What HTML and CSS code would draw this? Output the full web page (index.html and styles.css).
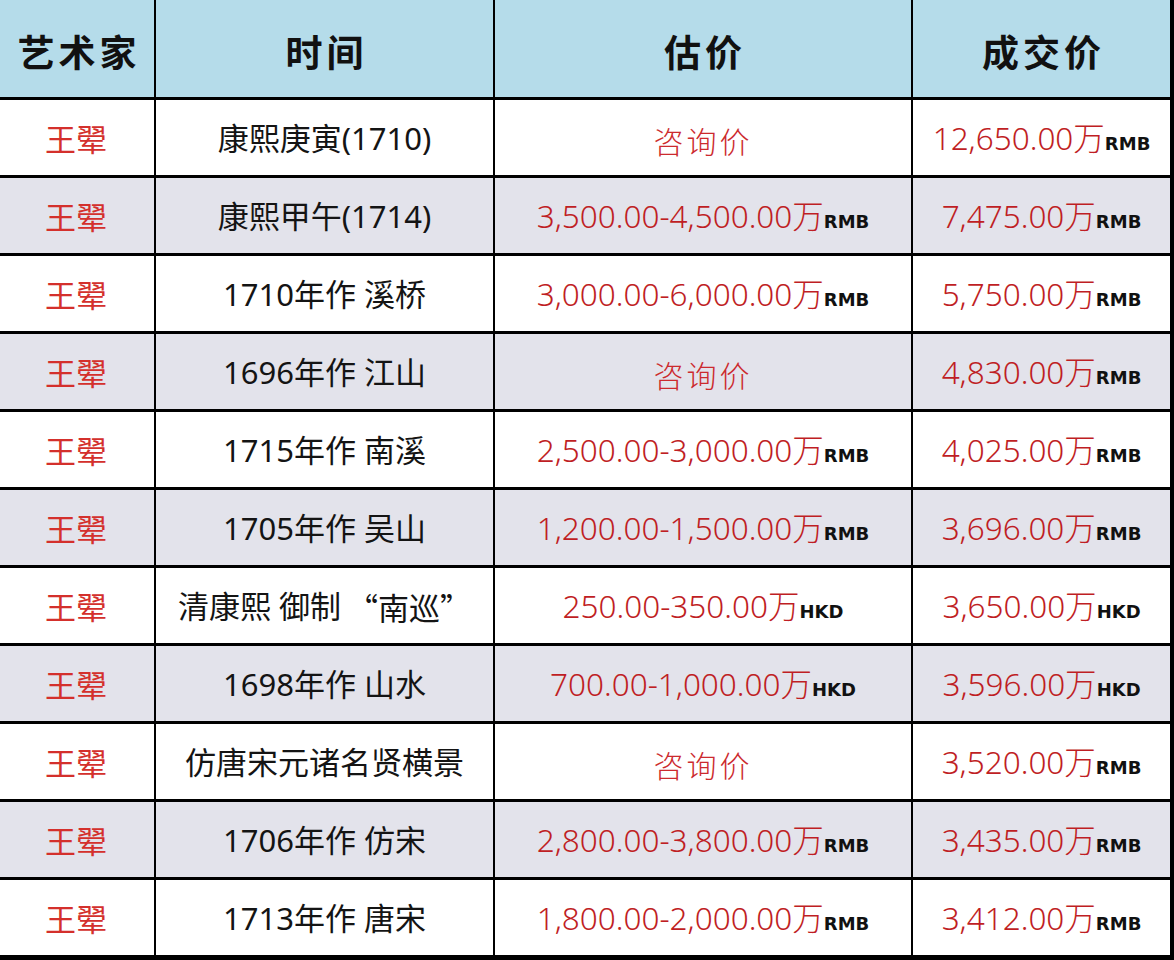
FILE: index.html
```html
<!DOCTYPE html>
<html lang="zh-CN">
<head>
<meta charset="utf-8">
<title>王翚 拍卖成交</title>
<link rel="stylesheet" href="styles.css">
</head>
<body>
<div class="table">
  <div class="row head">
    <div class="c">艺术家</div>
    <div class="c">时间</div>
    <div class="c">估价</div>
    <div class="c">成交价</div>
  </div>
  <div class="row">
    <div class="c artist">王翚</div>
    <div class="c time">康熙庚寅(1710)</div>
    <div class="c ask">咨询价</div>
    <div class="c price">12,650.00万<span class="cur">RMB</span></div>
  </div>
  <div class="row alt">
    <div class="c artist">王翚</div>
    <div class="c time">康熙甲午(1714)</div>
    <div class="c price">3,500.00-4,500.00万<span class="cur">RMB</span></div>
    <div class="c price">7,475.00万<span class="cur">RMB</span></div>
  </div>
  <div class="row">
    <div class="c artist">王翚</div>
    <div class="c time">1710年作 溪桥</div>
    <div class="c price">3,000.00-6,000.00万<span class="cur">RMB</span></div>
    <div class="c price">5,750.00万<span class="cur">RMB</span></div>
  </div>
  <div class="row alt">
    <div class="c artist">王翚</div>
    <div class="c time">1696年作 江山</div>
    <div class="c ask">咨询价</div>
    <div class="c price">4,830.00万<span class="cur">RMB</span></div>
  </div>
  <div class="row">
    <div class="c artist">王翚</div>
    <div class="c time">1715年作 南溪</div>
    <div class="c price">2,500.00-3,000.00万<span class="cur">RMB</span></div>
    <div class="c price">4,025.00万<span class="cur">RMB</span></div>
  </div>
  <div class="row alt">
    <div class="c artist">王翚</div>
    <div class="c time">1705年作 吴山</div>
    <div class="c price">1,200.00-1,500.00万<span class="cur">RMB</span></div>
    <div class="c price">3,696.00万<span class="cur">RMB</span></div>
  </div>
  <div class="row">
    <div class="c artist">王翚</div>
    <div class="c time">清康熙 御制<span class="q">“南巡”</span></div>
    <div class="c price">250.00-350.00万<span class="cur">HKD</span></div>
    <div class="c price">3,650.00万<span class="cur">HKD</span></div>
  </div>
  <div class="row alt">
    <div class="c artist">王翚</div>
    <div class="c time">1698年作 山水</div>
    <div class="c price">700.00-1,000.00万<span class="cur">HKD</span></div>
    <div class="c price">3,596.00万<span class="cur">HKD</span></div>
  </div>
  <div class="row">
    <div class="c artist">王翚</div>
    <div class="c time">仿唐宋元诸名贤横景</div>
    <div class="c ask">咨询价</div>
    <div class="c price">3,520.00万<span class="cur">RMB</span></div>
  </div>
  <div class="row alt">
    <div class="c artist">王翚</div>
    <div class="c time">1706年作 仿宋</div>
    <div class="c price">2,800.00-3,800.00万<span class="cur">RMB</span></div>
    <div class="c price">3,435.00万<span class="cur">RMB</span></div>
  </div>
  <div class="row">
    <div class="c artist">王翚</div>
    <div class="c time">1713年作 唐宋</div>
    <div class="c price">1,800.00-2,000.00万<span class="cur">RMB</span></div>
    <div class="c price">3,412.00万<span class="cur">RMB</span></div>
  </div>
</div>
</body>
</html>
```
FILE: styles.css
```css
html, body {
  margin: 0;
  padding: 0;
  background: #ffffff;
}

.table {
  width: 1174px;
  height: 960px;
  box-sizing: border-box;
  display: grid;
  grid-template-columns: 154px 337px 416px 257px;
  grid-template-rows: 97px repeat(11, 75px);
  column-gap: 2px;
  row-gap: 3px;
  background: #000000;
  border-right: 4px solid #000000;
  border-bottom: 5px solid #000000;
  font-family: "Noto Sans", "Noto Sans CJK SC", sans-serif;
}

.row {
  display: contents;
}

.c {
  background: #ffffff;
  display: flex;
  align-items: center;
  justify-content: center;
  white-space: nowrap;
  color: #141414;
  font-size: 31px;
  line-height: 1;
}

.row.alt .c {
  background: #e3e3eb;
}

.row.head .c {
  background: #b5dcea;
  font-family: "Noto Sans CJK SC", sans-serif;
  font-weight: 700;
  font-size: 37px;
  letter-spacing: 4px;
  padding-top: 6px;
  padding-left: 4px;
  color: #111111;
}

.artist {
  font-family: "Noto Sans CJK SC", sans-serif;
  color: #d4302c;
  padding-right: 2px;
}

.time {
  font-family: "Noto Sans", "Noto Sans CJK SC", sans-serif;
  color: #141414;
  padding-top: 2px;
}

.q {
  font-family: "Noto Sans CJK SC", sans-serif;
  margin-left: 6px;
}

.ask {
  font-family: "Noto Sans CJK SC", sans-serif;
  font-weight: 300;
  font-size: 30px;
  letter-spacing: 3px;
  color: #cc2a2e;
  padding-top: 4px;
}

.price {
  font-family: "Noto Sans", "Noto Sans CJK SC", sans-serif;
  font-weight: 300;
  font-size: 31.5px;
  color: #bf1e24;
  align-items: baseline;
  padding-top: 22px;
  box-sizing: border-box;
}

.cur {
  font-family: "DejaVu Sans", sans-serif;
  font-weight: 700;
  font-size: 18px;
  color: #111111;
  letter-spacing: 0;
}
```
